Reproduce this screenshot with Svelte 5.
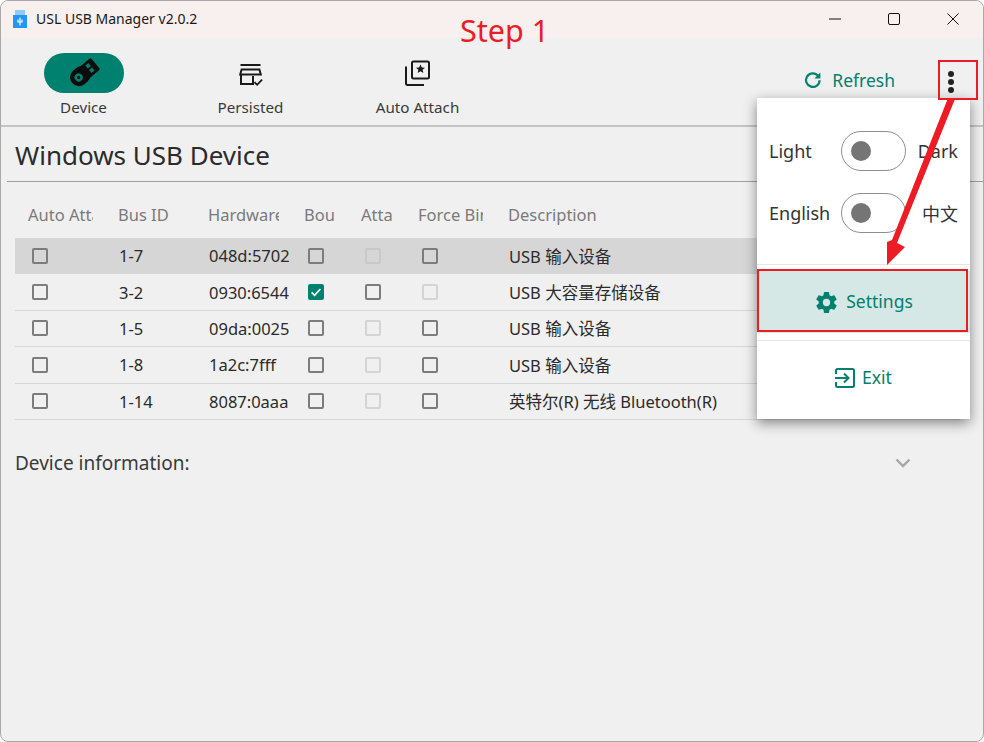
<script>
  const tabs = [
    { label: "Device", icon: "device", active: true },
    { label: "Persisted", icon: "persisted" },
    { label: "Auto Attach", icon: "attach" }
  ];

  const headers = ["Auto Attach", "Bus ID", "Hardware ID", "Bound", "Attached", "Force Bind", "Description"];

  // attach: true = checked, "off" = disabled
  const devices = [
    { bus: "1-7", hw: "048d:5702", bound: false, attached: "off", force: false, desc: "USB 输入设备", selected: true },
    { bus: "3-2", hw: "0930:6544", bound: true, attached: false, force: "off", desc: "USB 大容量存储设备" },
    { bus: "1-5", hw: "09da:0025", bound: false, attached: "off", force: false, desc: "USB 输入设备" },
    { bus: "1-8", hw: "1a2c:7fff", bound: false, attached: "off", force: false, desc: "USB 输入设备" },
    { bus: "1-14", hw: "8087:0aaa", bound: false, attached: "off", force: false, desc: "英特尔(R) 无线 Bluetooth(R)" }
  ];
</script>

{#snippet check(state)}
  <span class="check" class:on={state === true} class:off={state === "off"}>
    {#if state === true}
      <svg viewBox="0 0 16 16" width="16" height="16"><path d="M3.6 8.4l3 3 5.8-6.4" fill="none" stroke="#fff" stroke-width="1.6" /></svg>
    {/if}
  </span>
{/snippet}

<div class="window">
  <header class="titlebar">
    <svg class="app-icon" viewBox="0 0 14 18" width="14" height="18">
      <rect x="2" y="0" width="10" height="5" fill="#90caf9" />
      <rect x="0" y="5" width="14" height="13" fill="#2196f3" />
      <path d="M7 7.500v8M5 9.500v2.500h4V9.500" fill="none" stroke="#fff" stroke-width="1.2" />
    </svg>
    <span class="app-title">USL USB Manager v2.0.2</span>
    <div class="controls">
      <svg viewBox="0 0 12 12" width="12" height="12"><path d="M0 6h12" stroke="#111" stroke-width="1" /></svg>
      <svg viewBox="0 0 12 12" width="12" height="12"><rect x=".5" y=".5" width="11" height="11" rx="1.500" fill="none" stroke="#111" stroke-width="1" /></svg>
      <svg viewBox="0 0 12 12" width="12" height="12"><path d="M.5 .5l11 11M11.500 .5l-11 11" stroke="#111" stroke-width="1" /></svg>
    </div>
  </header>

  <nav class="toolbar">
    {#each tabs as tab}
      <div class="tab">
        <div class="pill" class:active={tab.active}>
          {#if tab.icon === "device"}
            <svg viewBox="0 0 30 30" width="32" height="32">
              <g transform="rotate(-40 15 15)">
                <rect x="0.500" y="6.800" width="20" height="16.400" rx="8" fill="#0c0c0c" />
                <rect x="14" y="8" width="15" height="14" rx="1.500" fill="#0c0c0c" />
                <rect x="20.500" y="10.500" width="3.600" height="3.600" fill="#00806e" />
                <rect x="20.500" y="15.900" width="3.600" height="3.600" fill="#00806e" />
                <circle cx="8.500" cy="15" r="3.800" fill="#00806e" />
                <circle cx="8.500" cy="15" r="1.500" fill="#0c0c0c" />
              </g>
            </svg>
          {:else if tab.icon === "persisted"}
            <svg class="persisted" viewBox="0 0 26 24" width="26" height="24" fill="none" stroke="#1a1a1a" stroke-width="2">
              <path d="M2.500 2h20" />
              <path d="M2.200 11.500 3.600 6.500h17.800l1.400 5z" />
              <path d="M3 11v10h12v-8" />
              <path d="M16.500 19.200l2.600 2.600 5-5.200" stroke-width="1.800" />
            </svg>
          {:else}
            <svg class="attach" viewBox="0 0 26 26" width="26" height="26" fill="none" stroke="#1a1a1a" stroke-width="2">
              <rect x="8" y="1.500" width="17" height="17" rx="1.500" />
              <path d="M2 6.500v17a1.500 1.500 0 0 0 1.500 1.500H20" />
              <path d="M16.500 4.500l1.400 3 3.100.3-2.400 2 .8 3.100-2.900-1.700-2.900 1.700.8-3.100-2.400-2 3.100-.3z" fill="#1a1a1a" stroke="none" />
            </svg>
          {/if}
        </div>
        <span class="tab-label">{tab.label}</span>
      </div>
    {/each}
    <div class="toolbar-right">
      <button class="refresh">
        <svg viewBox="0 0 18 18" width="18" height="18" fill="none" stroke="currentColor" stroke-width="2.200">
          <path d="M15.600 9.200a6.800 6.800 0 1 1-2-4.900L15.500 6" />
          <path d="M16.400 1.400v6h-6" fill="currentColor" stroke="none" />
        </svg>
        Refresh
      </button>
      <div class="kebab"><i></i><i></i><i></i></div>
    </div>
  </nav>

  <main class="content">
    <h1>Windows USB Device</h1>
    <div class="table">
      <div class="row head">
        {#each headers as h}<div class="cell"><span>{h}</span></div>{/each}
      </div>
      {#each devices as d}
        <div class="row" class:selected={d.selected}>
          <div class="cell box">{@render check(false)}</div>
          <div class="cell">{d.bus}</div>
          <div class="cell hw">{d.hw}</div>
          <div class="cell box">{@render check(d.bound)}</div>
          <div class="cell box">{@render check(d.attached)}</div>
          <div class="cell box">{@render check(d.force)}</div>
          <div class="cell">{d.desc}</div>
        </div>
      {/each}
    </div>
    <div class="info">
      <span>Device information:</span>
      <svg viewBox="0 0 16 10" width="16" height="10"><path d="M1.500 1.500 8 8l6.500-6.500" fill="none" stroke="#a6a6a6" stroke-width="2.400" /></svg>
    </div>
  </main>

  <div class="menu">
    <div class="switches">
      <div class="switch-row"><span class="start">Light</span><span class="toggle"><i></i></span><span class="end">Dark</span></div>
      <div class="switch-row"><span class="start">English</span><span class="toggle"><i></i></span><span class="end">中文</span></div>
    </div>
    <hr />
    <div class="menu-item hover">
      <svg viewBox="0 0 24 24" width="25" height="25"><path fill="currentColor" d="M12,15.500A3.500,3.500 0 0,1 8.500,12A3.500,3.500 0 0,1 12,8.500A3.500,3.500 0 0,1 15.500,12A3.500,3.500 0 0,1 12,15.500M19.430,12.970C19.470,12.650 19.500,12.330 19.500,12C19.500,11.670 19.470,11.340 19.430,11L21.540,9.370C21.730,9.220 21.780,8.950 21.660,8.730L19.660,5.270C19.540,5.050 19.270,4.960 19.050,5.050L16.560,6.050C16.040,5.660 15.500,5.320 14.870,5.070L14.500,2.420C14.460,2.180 14.250,2 14,2H10C9.750,2 9.540,2.180 9.500,2.420L9.130,5.070C8.500,5.320 7.960,5.660 7.440,6.050L4.950,5.050C4.730,4.960 4.460,5.050 4.340,5.270L2.340,8.730C2.210,8.950 2.270,9.220 2.460,9.370L4.570,11C4.530,11.340 4.500,11.670 4.500,12C4.500,12.330 4.530,12.650 4.570,12.970L2.460,14.630C2.270,14.780 2.210,15.050 2.340,15.270L4.340,18.730C4.460,18.950 4.730,19.030 4.950,18.950L7.440,17.940C7.960,18.340 8.500,18.680 9.130,18.930L9.500,21.580C9.540,21.820 9.750,22 10,22H14C14.250,22 14.460,21.820 14.500,21.580L14.870,18.930C15.500,18.670 16.040,18.340 16.560,17.940L19.050,18.950C19.270,19.030 19.540,18.950 19.660,18.730L21.660,15.270C21.780,15.050 21.730,14.780 21.540,14.630L19.430,12.970Z" /></svg>
      <span>Settings</span>
    </div>
    <hr />
    <div class="menu-item">
      <svg viewBox="0 0 20 20" width="20" height="20" fill="none" stroke="currentColor" stroke-width="2">
        <path d="M1 6V2.500A1.500 1.500 0 0 1 2.500 1h15A1.500 1.500 0 0 1 19 2.500v15a1.500 1.500 0 0 1-1.500 1.500h-15A1.500 1.500 0 0 1 1 17.500V14" />
        <path d="M0 10h13M9 5.500l4.500 4.500L9 14.500" />
      </svg>
      <span>Exit</span>
    </div>
  </div>

  <!-- annotations drawn over the screenshot -->
  <div class="step">Step 1</div>
  <div class="mark kebab-mark"></div>
  <div class="mark settings-mark"></div>
  <svg class="arrow" viewBox="0 0 984 742" width="984" height="742">
    <polygon points="887,265 905,247 897,243 955,99 948,98 892,240 887,242" fill="#ed1c24" />
  </svg>
</div>

<style>
  :global(body) {
    background: #fff;
  }

  .window {
    position: relative;
    box-sizing: border-box;
    width: 984px;
    height: 742px;
    overflow: hidden;
    display: flex;
    flex-direction: column;
    background: #f0f0f0;
    border: 1px solid #a8a8a8;
    border-radius: 8px;
    font-family: "Noto Sans", "Noto Sans CJK SC", sans-serif;
    color: #2b2b2b;
  }

  .titlebar {
    height: 36px;
    flex: none;
    display: flex;
    align-items: center;
    padding-left: 12px;
    background: #f7f0ee;
    font-size: 14px;
    color: #1a1a1a;
  }

  .app-icon {
    margin-top: -1px;
  }

  .app-title {
    margin-left: 9px;
    margin-top: -2px;
  }

  .controls {
    margin-left: auto;
    display: flex;
    gap: 47px;
    padding-right: 24px;
    margin-top: -1px;
  }

  .toolbar {
    height: 90px;
    flex: none;
    display: flex;
    padding-top: 16px;
    box-sizing: border-box;
    border-bottom: 2px solid #c4c4c4;
  }

  .tab {
    width: 167px;
    display: flex;
    flex-direction: column;
    align-items: center;
  }

  .tab:first-child {
    margin-left: -1px;
  }

  .pill {
    width: 80px;
    height: 40px;
    border-radius: 20px;
    display: flex;
    align-items: center;
    justify-content: center;
  }

  .pill.active {
    background: #00806e;
  }

  .persisted {
    margin-top: 4px;
  }

  .attach {
    margin-left: -2px;
  }

  .tab-label {
    margin-top: 3px;
    font-size: 15.200px;
    line-height: 22px;
    color: #3a3a3a;
  }

  .toolbar-right {
    margin-left: auto;
    display: flex;
    align-items: flex-start;
  }

  .refresh {
    display: flex;
    align-items: center;
    gap: 10px;
    margin: 0;
    padding: 0;
    height: 54px;
    border: 0;
    background: none;
    font: inherit;
    font-size: 17.500px;
    color: #00806e;
  }

  .kebab {
    width: 6px;
    margin: 18px 29px 0 53px;
    display: flex;
    flex-direction: column;
    gap: 2px;
  }

  .kebab i {
    height: 6px;
    border-radius: 50%;
    background: #222;
  }

  .content {
    flex: 1;
    padding: 0 0 0 6px;
  }

  h1 {
    margin: 0;
    height: 55px;
    box-sizing: border-box;
    padding: 10px 0 0 8px;
    font-size: 26px;
    line-height: 36px;
    font-weight: 400;
    color: #2b2b2b;
    border-bottom: 1px solid #a0a0a0;
  }

  .table {
    margin: 15px 0 0 8px;
    width: 945px;
  }

  .row {
    display: grid;
    grid-template-columns: 90px 90px 96px 57px 57px 90px 1fr;
    height: 36.400px;
    box-sizing: border-box;
    border-bottom: 1px solid #d6d6d6;
    font-size: 16.500px;
    align-items: center;
  }

  .row.head {
    height: 41px;
    padding-bottom: 6px;
    border-bottom: 0;
    color: #7a7a7a;
  }

  .row.selected {
    background: #d6d6d6;
  }

  .cell {
    padding-left: 14px;
    white-space: nowrap;
    overflow: hidden;
  }

  .head .cell {
    padding: 0 12px 0 13px;
  }

  .head .cell span {
    display: block;
    overflow: hidden;
  }

  .hw {
    overflow: visible;
  }

  .box {
    padding-left: 17px;
    padding-top: 1px;
    height: 17px;
  }

  .check {
    display: block;
    box-sizing: border-box;
    width: 16px;
    height: 16px;
    border: 2px solid #7c7c7c;
    border-radius: 2px;
  }

  .check svg {
    display: block;
    margin: -2px;
  }

  .check.on {
    background: #00806e;
    border-color: #00806e;
  }

  .check.off {
    border-color: #d4d4d4;
  }

  .selected .check.off {
    border-color: #c8c8c8;
  }

  .info {
    display: flex;
    align-items: center;
    justify-content: space-between;
    margin: 30px 0 0 8px;
    width: 896px;
    font-size: 19px;
    color: #3a3a3a;
  }

  .menu {
    position: absolute;
    left: 756px;
    top: 97px;
    width: 213px;
    height: 321px;
    box-sizing: border-box;
    padding-top: 22px;
    background: #fff;
    box-shadow: 0 4px 12px rgba(0, 0, 0, 0.45);
  }

  .switch-row {
    height: 62px;
    display: flex;
    align-items: center;
    padding: 0 12px;
    font-size: 18px;
    color: #333;
  }

  .start,
  .end {
    margin-top: -1px;
  }

  .start {
    width: 72px;
  }

  .toggle {
    box-sizing: border-box;
    width: 65px;
    height: 40px;
    border: 1.500px solid #8e8e8e;
    border-radius: 20px;
    padding: 8.500px 9px;
  }

  .toggle i {
    display: block;
    width: 20px;
    height: 20px;
    border-radius: 50%;
    background: #757575;
  }

  .end {
    margin-left: auto;
  }

  hr {
    margin: 20px 0 6px;
    border: 0;
    border-top: 1px solid #e6e6e6;
  }

  .menu-item + hr {
    margin: 7px 0 6px;
  }

  .menu-item {
    height: 62px;
    display: flex;
    align-items: center;
    justify-content: center;
    gap: 7px;
    font-size: 17.500px;
    color: #00806e;
  }

  .menu-item span {
    margin-top: -3px;
  }

  .menu-item.hover {
    background: #d6e8e5;
  }

  .step {
    position: absolute;
    left: 459px;
    top: 7px;
    font-size: 30.500px;
    line-height: 44px;
    color: #ed1c24;
  }

  .mark {
    position: absolute;
    box-sizing: border-box;
    border: 2px solid #ed1c24;
  }

  .kebab-mark {
    left: 937px;
    top: 59px;
    width: 40px;
    height: 40px;
  }

  .settings-mark {
    left: 756px;
    top: 268px;
    width: 211px;
    height: 63px;
  }

  .arrow {
    position: absolute;
    left: -1px;
    top: -1px;
    pointer-events: none;
  }
</style>
